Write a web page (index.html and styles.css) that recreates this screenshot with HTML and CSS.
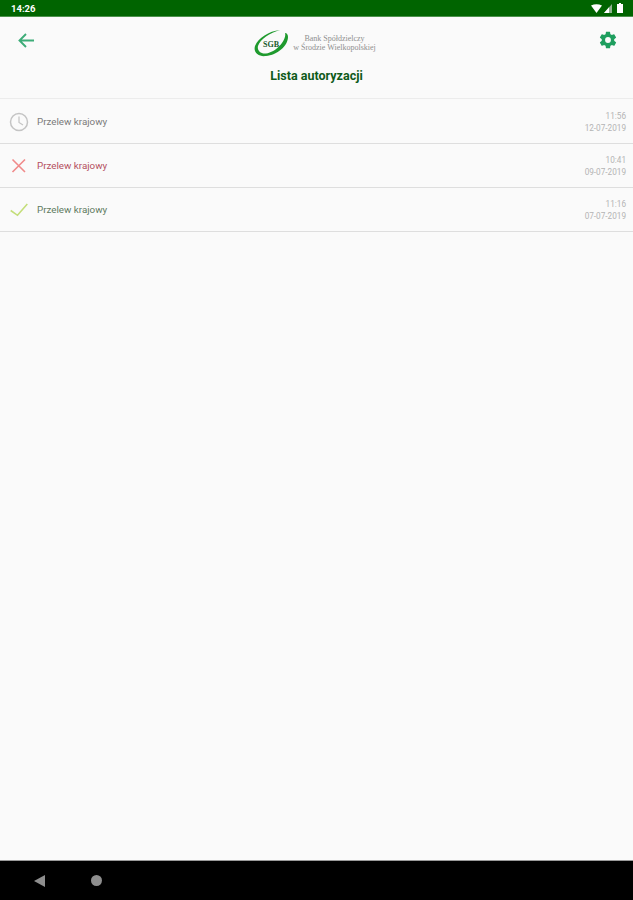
FILE: index.html
```html
<!DOCTYPE html>
<html lang="pl">
<head>
<meta charset="utf-8">
<title>Lista autoryzacji</title>
<link rel="stylesheet" href="styles.css">
</head>
<body>
<div class="screen">
  <div class="statusbar">
    <span class="clock">14:26</span>
    <div class="status-icons">
      <svg width="11" height="9" viewBox="0 0 11 9"><path d="M0 1.500Q5.500-1 11 1.500L5.500 9Z" fill="#fff"/></svg>
      <svg width="8" height="9" viewBox="0 0 8 9"><path d="M8 0V9H0Z" fill="#8fb28f"/><path d="M5 3.200V9H0Z" fill="#fff"/></svg>
      <svg width="6" height="10" viewBox="0 0 6 10"><path d="M2 0H4V1H6V10H0V1H2Z" fill="#fff"/></svg>
    </div>
  </div>
  <header class="topbar">
    <div class="topbar-row">
      <svg class="back" width="16" height="15" viewBox="0 0 16 15"><path d="M16 7.500H2M8 1 1.500 7.500 8 14" fill="none" stroke="#3dac78" stroke-width="1.900"/></svg>
      <div class="logo">
        <svg width="36" height="28" viewBox="0 0 36 28">
          <path d="M27 1C16 2 5 9 2 17 0 24 6 28 13 27 24 26 35 17 35 8 35 6 34 4 32 4 34 10 24 23 13 24.500 7 25 4 21 5 17 7 10 17 4 27 1Z" fill="#1f9a2e"/>
          <text x="18" y="18" class="logo-sgb">SGB</text>
        </svg>
        <div class="logo-text"><span>Bank Spółdzielczy</span><span>w Środzie Wielkopolskiej</span></div>
      </div>
      <svg class="gear" width="20" height="20" viewBox="0 0 24 24"><path fill="#1e9e5e" d="M19.400 13c.04-.33.060-.66.060-1s-.02-.67-.060-1l2.100-1.650c.19-.15.240-.42.120-.64l-2-3.460c-.12-.22-.38-.3-.61-.22l-2.490 1c-.52-.4-1.080-.73-1.690-.98l-.38-2.650A.488.488 0 0 0 14 2h-4c-.25 0-.46.18-.49.420l-.38 2.650c-.61.25-1.170.59-1.690.98l-2.490-1c-.23-.09-.49 0-.61.220l-2 3.460c-.13.220-.07.490.12.640L4.570 11c-.04.330-.07.670-.07 1s.03.670.07 1l-2.110 1.650c-.19.150-.24.420-.12.640l2 3.460c.12.220.38.300.61.220l2.490-1c.52.400 1.080.730 1.690.980l.38 2.650c.03.240.24.420.49.420h4c.25 0 .46-.18.49-.42l.38-2.650c.61-.25 1.170-.59 1.690-.98l2.490 1c.23.090.49 0 .61-.22l2-3.460c.12-.22.070-.49-.12-.64L19.400 13ZM12 15.500a3.500 3.500 0 1 1 0-7 3.500 3.500 0 0 1 0 7Z"/></svg>
    </div>
    <h1 class="title">Lista autoryzacji</h1>
  </header>
  <main class="list">
    <div class="item">
      <svg class="item-icon" width="20" height="20" viewBox="0 0 20 20"><circle cx="10" cy="10" r="8.500" fill="none" stroke="#c4c4c4" stroke-width="1.500"/><path d="M10 4.500V10.500L14 13" fill="none" stroke="#c4c4c4" stroke-width="1.200"/></svg>
      <span class="item-name">Przelew krajowy</span>
      <div class="item-date"><span>11:56</span><span>12-07-2019</span></div>
    </div>
    <div class="item">
      <svg class="item-icon" width="20" height="20" viewBox="0 0 20 20"><path d="M3.500 3.500 16 16M16 3.500 3.500 16" fill="none" stroke="#f08a8a" stroke-width="1.600"/></svg>
      <span class="item-name rejected">Przelew krajowy</span>
      <div class="item-date"><span>10:41</span><span>09-07-2019</span></div>
    </div>
    <div class="item">
      <svg class="item-icon" width="20" height="20" viewBox="0 0 20 20"><path d="M1.700 10.500 8.500 15.300 18.300 4" fill="none" stroke="#c4de7a" stroke-width="1.600"/></svg>
      <span class="item-name accepted">Przelew krajowy</span>
      <div class="item-date"><span>11:16</span><span>07-07-2019</span></div>
    </div>
  </main>
  <nav class="navbar">
    <span class="nav-back"></span>
    <span class="nav-home"></span>
  </nav>
</div>
</body>
</html>
```
FILE: styles.css
```css
* { box-sizing: border-box; }
html, body { margin: 0; padding: 0; }
body { font-family: Roboto, "Liberation Sans", sans-serif; background: #fafafa; }
.screen { width: 633px; height: 900px; display: flex; flex-direction: column; background: #fafafa; }
.statusbar { height: 17px; flex: none; background: #006400; border-bottom: 1px solid #4d924d; display: flex; align-items: center; justify-content: space-between; padding: 0 10px 0 11px; }
.clock { color: #fff; font-size: 9.500px; font-weight: 700; }
.status-icons { display: flex; align-items: center; gap: 2px; }
.status-icons svg:last-child { margin-left: 3px; }
.topbar { height: 81px; flex: none; display: flex; flex-direction: column; }
.topbar-row { height: 46px; display: flex; align-items: center; justify-content: space-between; padding: 0 15px 0 18px; }
.logo { display: flex; align-items: center; gap: 4px; margin-left: -3px; margin-top: 5px; }
.logo-sgb { font: 700 8px "Liberation Serif", serif; fill: #1c5c2c; text-anchor: middle; }
.logo-text { display: flex; flex-direction: column; align-items: center; font: 8px/9px "Liberation Serif", serif; color: #8f8f8f; }
.gear { margin-top: -1px; }
.title { margin: 5px 0 0; text-align: center; font-size: 12.500px; line-height: 16px; font-weight: 700; color: #0f5a1a; }
.list { flex: 1; border-top: 1px solid #ececec; padding-top: 1px; }
.item { height: 44px; display: flex; align-items: center; padding: 0 7px 0 9px; border-bottom: 1px solid #dedede; }
.item-icon { flex: none; }
.item-name { margin-left: 8px; flex: 1; font-size: 9.800px; color: #7a7a7a; }
.item-name.rejected { color: #b5505f; }
.item-name.accepted { color: #5f7a5f; }
.item-date { display: flex; flex-direction: column; align-items: flex-end; gap: 2px; margin-top: 1px; font-size: 8.200px; line-height: 10px; color: #b4b4b4; }
.navbar { height: 40px; flex: none; background: #000; border-top: 1px solid #9a9a9a; display: flex; align-items: center; padding-left: 34px; gap: 46px; }
.nav-back { width: 0; height: 0; border-style: solid; border-width: 6px 11px 6px 0; border-color: transparent #8e8e8e transparent transparent; }
.nav-home { width: 11px; height: 11px; border-radius: 50%; background: #8e8e8e; }
```
